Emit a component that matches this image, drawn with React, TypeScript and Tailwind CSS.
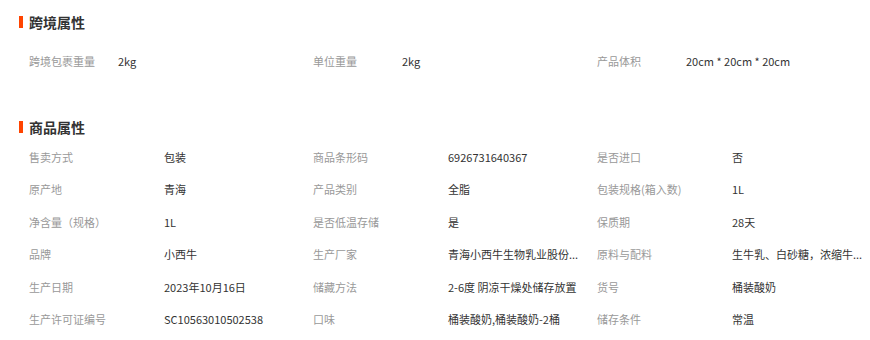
const crossBorder = [
  { label: '跨境包裹重量', value: '2kg' },
  { label: '单位重量', value: '2kg' },
  { label: '产品体积', value: '20cm * 20cm * 20cm' },
]

// long values are shown already shortened, as on the page
const goods = [
  { label: '售卖方式', value: '包装' },
  { label: '商品条形码', value: '6926731640367' },
  { label: '是否进口', value: '否' },
  { label: '原产地', value: '青海' },
  { label: '产品类别', value: '全脂' },
  { label: '包装规格(箱入数)', value: '1L' },
  { label: '净含量（规格）', value: '1L' },
  { label: '是否低温存储', value: '是' },
  { label: '保质期', value: '28天' },
  { label: '品牌', value: '小西牛' },
  { label: '生产厂家', value: '青海小西牛生物乳业股份...' },
  { label: '原料与配料', value: '生牛乳、白砂糖，浓缩牛...' },
  { label: '生产日期', value: '2023年10月16日' },
  { label: '储藏方法', value: '2-6度 阴凉干燥处储存放置' },
  { label: '货号', value: '桶装酸奶' },
  { label: '生产许可证编号', value: 'SC10563010502538' },
  { label: '口味', value: '桶装酸奶,桶装酸奶-2桶' },
  { label: '储存条件', value: '常温' },
]

function SectionTitle({ title }: { title: string }) {
  return (
    <div className="flex items-center h-[20px]">
      <div className="w-[4px] h-[12px] bg-[#ff4400]" />
      <h3 className="ml-[6px] text-[14px] font-bold text-[#333]">{title}</h3>
    </div>
  )
}

export default function App() {
  return (
    <div
      className="w-[870px] h-[340px] bg-white pl-[19px] pt-[12px] overflow-hidden"
      style={{ fontFamily: '"Noto Sans CJK SC", "Noto Sans", sans-serif' }}
    >
      {/* 跨境属性 */}
      <SectionTitle title="跨境属性" />
      <div className="mt-[13px] pl-[10px] grid grid-cols-[284px_284px_284px] text-[11px]">
        {crossBorder.map((item) => (
          <div key={item.label} className="flex items-center h-[32px]">
            <span className="w-[89px] shrink-0 text-[#999]">{item.label}</span>
            <span className="text-[#333] whitespace-nowrap">{item.value}</span>
          </div>
        ))}
      </div>

      {/* 商品属性 */}
      <div className="mt-[40px]">
        <SectionTitle title="商品属性" />
      </div>
      <div className="mt-[4px] pl-[10px] grid grid-cols-[284px_284px_284px] text-[11px]">
        {goods.map((item) => (
          <div key={item.label} className="flex items-center h-[32.4px]">
            <span className="w-[135px] shrink-0 text-[#999] whitespace-nowrap">{item.label}</span>
            <span className="text-[#333] whitespace-nowrap">{item.value}</span>
          </div>
        ))}
      </div>
    </div>
  )
}
